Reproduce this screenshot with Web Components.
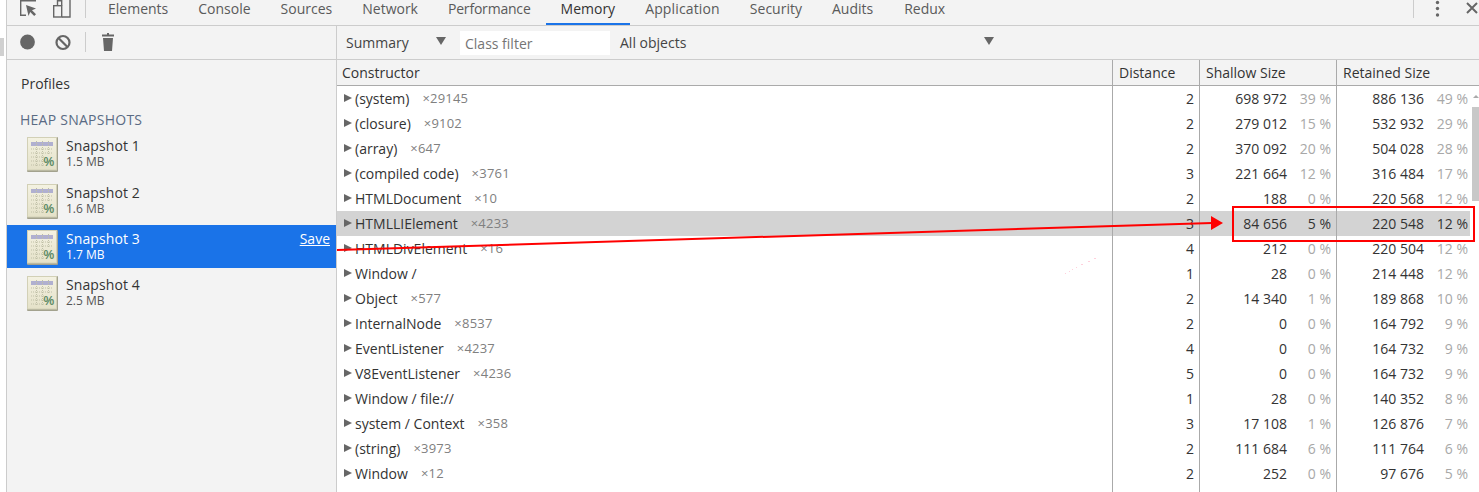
<!DOCTYPE html>
<html>
<head>
<meta charset="utf-8">
<style>
html,body{margin:0;height:492px;overflow:hidden;background:#fff;}
body{font-family:"Open Sans","Noto Sans",sans-serif;font-size:14px;color:#333;}
</style>
</head>
<body>
<devtools-app></devtools-app>
<script>
class DtTab extends HTMLElement {
    constructor() {
        super();
        this.attachShadow({mode:'open'});
        this.shadowRoot.innerHTML = `
        <style>
        :host{display:block;height:25px;padding:0 15px;box-sizing:border-box;color:#5a5a5a;line-height:17px;font-size:14px;white-space:nowrap;}
        :host([active]){color:#333;border-bottom:2px solid #1a73e8;}
        </style>
        <slot></slot>`;
    }
}
customElements.define('dt-tab',DtTab);

class TopBar extends HTMLElement {
    constructor() {
        super();
        this.attachShadow({mode:'open'});
        this.shadowRoot.innerHTML = `
        <style>
        :host{display:flex;height:26px;box-sizing:border-box;border-bottom:1px solid #ccc;background:#f3f3f3;}
        .icons{display:flex;width:86px;flex:none;}
        .sep{width:1px;height:18px;background:#ccc;}
        svg{flex:none;display:block;}
        .right{margin-left:auto;display:flex;width:66px;}
        </style>
        <div class="icons">
            <svg width="78" height="25" viewBox="7 0 78 25" fill="none">
                <path d="M36 .7H20.700V15.300H26" stroke="#666" stroke-width="1.400"/>
                <path d="M26 5l10 3.500-4 1.800 4 4-1.800 1.800-4-4L28.500 16z" fill="#666"/>
                <path d="M62 17h8V0" stroke="#666" stroke-width="1.400"/>
                <rect x="53.700" y="5.700" width="8" height="11.300" stroke="#666" stroke-width="1.400"/>
                <path d="M57.500 5.500V.7h4.200V5.500" stroke="#666" stroke-width="1.400"/>
            </svg>
            <div class="sep"></div>
        </div>
        <slot></slot>
        <div class="right">
            <div class="sep"></div>
            <svg width="65" height="25" viewBox="0 0 65 25">
                <circle cx="23.500" cy="2.500" r="1.700" fill="#666"/><circle cx="23.500" cy="8.500" r="1.700" fill="#666"/><circle cx="23.500" cy="15" r="1.700" fill="#666"/>
                <path d="M53 3l10 10M63 3L53 13" stroke="#666" stroke-width="2"/>
            </svg>
        </div>`;
    }
}
customElements.define('top-bar',TopBar);

class SubBar extends HTMLElement {
    constructor() {
        super();
        this.attachShadow({mode:'open'});
        this.shadowRoot.innerHTML = `
        <style>
        :host{display:flex;height:34px;box-sizing:border-box;border-bottom:1px solid #ccc;background:#f3f3f3;color:#333;font-size:14px;}
        .left{width:330px;flex:none;box-sizing:border-box;border-right:1px solid #ccc;display:flex;align-items:center;}
        .sel{display:flex;align-items:center;color:#444;white-space:nowrap;justify-content:space-between;}
        .tri{width:0;height:0;border-left:5px solid transparent;border-right:5px solid transparent;border-top:8px solid #666;margin-top:-3px;flex:none;}
        .field{width:150px;height:24px;align-self:center;background:#fff;box-sizing:border-box;padding-left:5px;line-height:26px;color:#757575;margin:0 10px 0 14px;}
        .one{width:100px;padding-left:9px;}
        .two{width:374px;}
        </style>
        <div class="left">
            <svg width="113" height="33" viewBox="7 0 113 33">
                <circle cx="27.500" cy="16" r="7.400" fill="#666"/>
                <circle cx="63" cy="16.500" r="6.500" fill="none" stroke="#666" stroke-width="2.200"/>
                <path d="M58.500 12l9 9" stroke="#666" stroke-width="2.200"/>
                <rect x="85" y="6" width="1" height="20" fill="#ccc"/>
                <path d="M107 7h2v1.500h5v2h-12v-2h5V7z M103 12h10l-1 13h-8z" fill="#666"/>
            </svg>
        </div>
        <div class="sel one"><span>Summary</span><i class="tri"></i></div>
        <div class="field">Class filter</div>
        <div class="sel two"><span>All objects</span><i class="tri"></i></div>`;
    }
}
customElements.define('sub-bar',SubBar);

class SnapshotIcon extends HTMLElement {
    constructor() {
        super();
        this.attachShadow({mode:'open'});
        this.shadowRoot.innerHTML = `
        <style>:host{display:block;width:31px;height:35px;flex:none;margin-top:2px;} svg{display:block;}</style>
        <svg width="31" height="35" viewBox="0 0 31 35">
            <defs><linearGradient id="g" x1="0" y1="0" x2="0" y2="1"><stop offset="0" stop-color="#f4f2e2"/><stop offset="1" stop-color="#e4e1c8"/></linearGradient></defs>
            <rect x="0" y="0" width="31" height="35" rx="1" fill="#a3a28e"/>
            <rect x=".5" y=".5" width="29" height="32.500" fill="url(#g)" stroke="#d2d0b6"/>
            <rect x="4" y="5" width="22" height="4" fill="#b0b0d0"/>
            <g stroke="#bfbfa6" stroke-width="1" stroke-dasharray="1 1">
                <path d="M4 12h22M4 16h22M4 20h13M4 24h13M4 28h13"/>
                <path d="M9.500 4v25M15.500 4v25M21.500 4v14"/>
            </g>
            <text x="16.500" y="29" font-family="Liberation Sans,sans-serif" font-size="12" font-weight="bold" fill="#5c8a66">%</text>
        </svg>`;
    }
}
customElements.define('snapshot-icon',SnapshotIcon);

class SnapshotItem extends HTMLElement {
    constructor() {
        super();
        this.attachShadow({mode:'open'});
        this.shadowRoot.innerHTML = `
        <style>
        :host{display:flex;height:43px;margin-bottom:3px;padding:3px 6px 0 20px;box-sizing:border-box;gap:8px;color:#333;}
        :host(:first-child){margin-bottom:4px;}
        :host([selected]){background:#1a73e8;color:#fff;}
        .t{flex:1;padding-top:2px;}
        .n{font-size:14px;line-height:18px;letter-spacing:.1px;white-space:nowrap;display:flex;justify-content:space-between;}
        .s{font-size:12px;line-height:14px;color:#555;}
        :host([selected]) .s{color:#fff;}
        u{display:none;letter-spacing:0;}
        :host([selected]) u{display:inline;}
        </style>
        <snapshot-icon></snapshot-icon>
        <div class="t">
            <div class="n"><span><slot></slot></span><u>Save</u></div>
            <div class="s">${this.getAttribute('size')}</div>
        </div>`;
    }
}
customElements.define('snapshot-item',SnapshotItem);

class ProfilesSide extends HTMLElement {
    constructor() {
        super();
        this.attachShadow({mode:'open'});
        this.shadowRoot.innerHTML = `
        <style>
        :host{display:block;width:330px;flex:none;box-sizing:border-box;border-right:1px solid #ccc;background:#f3f3f3;height:100%;padding-top:14px;}
        .p{padding-left:14px;line-height:20px;font-size:14px;color:#333;}
        .h{padding-left:13px;margin-top:16px;line-height:20px;color:#5a6b84;font-size:14px;letter-spacing:.25px;margin-bottom:2px;}
        </style>
        <div class="p">Profiles</div>
        <div class="h">HEAP SNAPSHOTS</div>
        <slot></slot>`;
    }
}
customElements.define('profiles-side',ProfilesSide);

class HeapRow extends HTMLElement {
    constructor() {
        super();
        this.attachShadow({mode:'open'});
        const count = this.getAttribute('count');
        this.shadowRoot.innerHTML = `
        <style>
        :host{display:grid;grid-template-columns:776px 87px 137px 133px;width:1133px;height:25px;line-height:25px;font-size:14px;color:#333;white-space:nowrap;}
        :host([selected]){background:#d3d3d3;}
        .c{box-sizing:border-box;display:flex;}
        .name{padding-left:7px;align-items:center;}
        .tri{width:0;height:0;border-top:4.500px solid transparent;border-bottom:4.500px solid transparent;border-left:8px solid #666;margin-right:3px;margin-top:-2px;}
        .count{color:#808080;margin-left:13px;font-size:13px;letter-spacing:.2px;}
        .num{justify-content:flex-end;padding-right:6px;}
        .last{padding-right:2px;}
        .pct{color:#a8a8a8;width:44px;text-align:right;}
        :host([selected]) .pct{color:#333;}
        </style>
        <div class="c name"><i class="tri"></i><span>${this.getAttribute('name')}</span>${count ? `<span class="count">×${count}</span>` : ''}</div>
        <div class="c num">${this.getAttribute('dist')}</div>
        <div class="c num"><span>${this.getAttribute('shallow')}</span><span class="pct">${this.getAttribute('sp')} %</span></div>
        <div class="c num last"><span>${this.getAttribute('retained')}</span><span class="pct">${this.getAttribute('rp')} %</span></div>`;
    }
}
customElements.define('heap-row',HeapRow);

const ROWS = [
    ['(system)','29145',2,'698 972',39,'886 136',49],
    ['(closure)','9102',2,'279 012',15,'532 932',29],
    ['(array)','647',2,'370 092',20,'504 028',28],
    ['(compiled code)','3761',3,'221 664',12,'316 484',17],
    ['HTMLDocument','10',2,'188',0,'220 568',12],
    ['HTMLLIElement','4233',3,'84 656',5,'220 548',12],
    ['HTMLDivElement','16',4,'212',0,'220 504',12],
    ['Window /','',1,'28',0,'214 448',12],
    ['Object','577',2,'14 340',1,'189 868',10],
    ['InternalNode','8537',2,'0',0,'164 792',9],
    ['EventListener','4237',4,'0',0,'164 732',9],
    ['V8EventListener','4236',5,'0',0,'164 732',9],
    ['Window / file://','',1,'28',0,'140 352',8],
    ['system / Context','358',3,'17 108',1,'126 876',7],
    ['(string)','3973',2,'111 684',6,'111 764',6],
    ['Window','12',2,'252',0,'97 676',5]
];

class HeapGrid extends HTMLElement {
    constructor() {
        super();
        this.attachShadow({mode:'open'});
        let rows = '';
        ROWS.forEach((r,i) => {
            rows += `<heap-row ${i==5?'selected':''} name="${r[0]}" count="${r[1]}" dist="${r[2]}" shallow="${r[3]}" sp="${r[4]}" retained="${r[5]}" rp="${r[6]}"></heap-row>`;
        });
        this.shadowRoot.innerHTML = `
        <style>
        :host{display:block;flex:1;min-width:0;position:relative;overflow:hidden;height:100%;}
        .head{display:grid;grid-template-columns:776px 87px 137px 1fr;height:26px;box-sizing:border-box;background:#f3f3f3;border-bottom:1px solid #aaa;line-height:25px;font-size:14px;color:#333;}
        .head div{padding-left:5px;}
        .head div+div{padding-left:6px;}
        .lines{position:absolute;left:0;top:0;bottom:0;width:1px;background:#aaa;}
        .scroll{position:absolute;right:0;top:26px;bottom:0;width:7px;}
        .up{position:absolute;left:1px;top:9px;border-left:3px solid transparent;border-right:3px solid transparent;border-bottom:3px solid #aaa;}
        .thumb{position:absolute;left:0;top:21px;width:7px;height:94px;background:#c8c8c8;}
        </style>
        <div class="head"><div>Constructor</div><div>Distance</div><div>Shallow Size</div><div>Retained Size</div></div>
        ${rows}
        <div class="lines" style="left:775px"></div>
        <div class="lines" style="left:862px"></div>
        <div class="lines" style="left:999px"></div>
        <div class="scroll"><div class="up"></div><div class="thumb"></div></div>`;
    }
}
customElements.define('heap-grid',HeapGrid);

class DevtoolsApp extends HTMLElement {
    constructor() {
        super();
        this.attachShadow({mode:'open'});
        this.shadowRoot.innerHTML = `
        <style>
        :host{display:flex;flex-direction:column;width:1479px;height:492px;position:relative;overflow:hidden;background:#fff;}
        .shell{flex:1;display:flex;flex-direction:column;margin-left:6px;border-left:1px solid #ccc;min-height:0;}
        .main{flex:1;display:flex;min-height:0;}
        .strip{position:absolute;left:0;top:38px;width:4px;height:18px;background:#d0d0d0;}
        .overlay{position:absolute;left:0;top:0;pointer-events:none;}
        </style>
        <div class="shell">
            <top-bar>
                <dt-tab>Elements</dt-tab><dt-tab>Console</dt-tab><dt-tab>Sources</dt-tab><dt-tab>Network</dt-tab><dt-tab style="letter-spacing:-.2px">Performance</dt-tab><dt-tab active>Memory</dt-tab><dt-tab style="letter-spacing:.15px">Application</dt-tab><dt-tab>Security</dt-tab><dt-tab>Audits</dt-tab><dt-tab style="margin-left:1px">Redux</dt-tab>
            </top-bar>
            <sub-bar></sub-bar>
            <div class="main">
                <profiles-side>
                    <snapshot-item size="1.5 MB">Snapshot 1</snapshot-item>
                    <snapshot-item size="1.6 MB">Snapshot 2</snapshot-item>
                    <snapshot-item size="1.7 MB" selected>Snapshot 3</snapshot-item>
                    <snapshot-item size="2.5 MB">Snapshot 4</snapshot-item>
                </profiles-side>
                <heap-grid></heap-grid>
            </div>
        </div>
        <div class="strip"></div>
        <svg class="overlay" width="1479" height="492" viewBox="0 0 1479 492" fill="none">
            <path d="M337 250L1212 223" stroke="#f00" stroke-width="2"/>
            <path d="M1211 216l12 7-12 7z" fill="#f00"/>
            <rect x="1233" y="207" width="241" height="34" stroke="#f00" stroke-width="2"/>
            <path d="M1065 273.500h1M1069 271.500h1M1072 269.500h1M1076 267.500h1M1081 264.500h2M1088 261.500h2M1094 258.500h2" stroke="#ffd0dc"/>
        </svg>`;
    }
}
customElements.define('devtools-app',DevtoolsApp);
</script>
</body>
</html>
